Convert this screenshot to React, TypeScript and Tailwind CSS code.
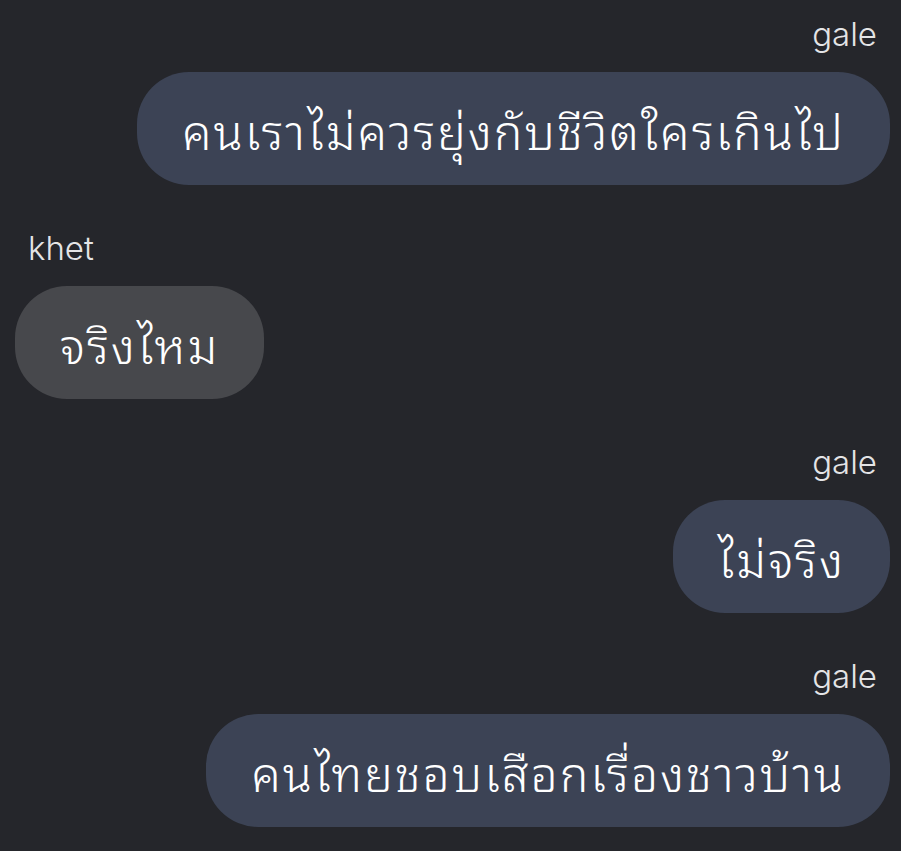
const messages = [
  { from: 'gale', mine: true, text: 'คนเราไม่ควรยุ่งกับชีวิตใครเกินไป' },
  { from: 'khet', mine: false, text: 'จริงไหม' },
  { from: 'gale', mine: true, text: 'ไม่จริง' },
  { from: 'gale', mine: true, text: 'คนไทยชอบเสือกเรื่องชาวบ้าน' },
];

export default function App() {
  return (
    <div className="min-h-[851px] bg-[#25262b] pt-4 pl-[15px] pr-[11px] flex flex-col gap-[45px] font-['Inter',sans-serif]">
      {messages.map((m, i) => (
        <div key={i} className={`flex flex-col gap-5 ${m.mine ? 'items-end' : 'items-start'}`}>
          <div className="px-[13px] text-[33px] leading-9 font-light text-[#e4e4e6]">{m.from}</div>
          <div
            className={`h-[113px] flex items-center px-[45px] rounded-[52px] text-[48px] font-light tracking-[2px] text-white font-['Noto_Sans_Thai_Looped','Loma','Garuda','Norasi','Kinnari','Noto_Sans_Thai',sans-serif] ${
              m.mine ? 'bg-[#3c4355]' : 'bg-[#47484c]'
            }`}
          >
            {m.text}
          </div>
        </div>
      ))}
    </div>
  );
}
